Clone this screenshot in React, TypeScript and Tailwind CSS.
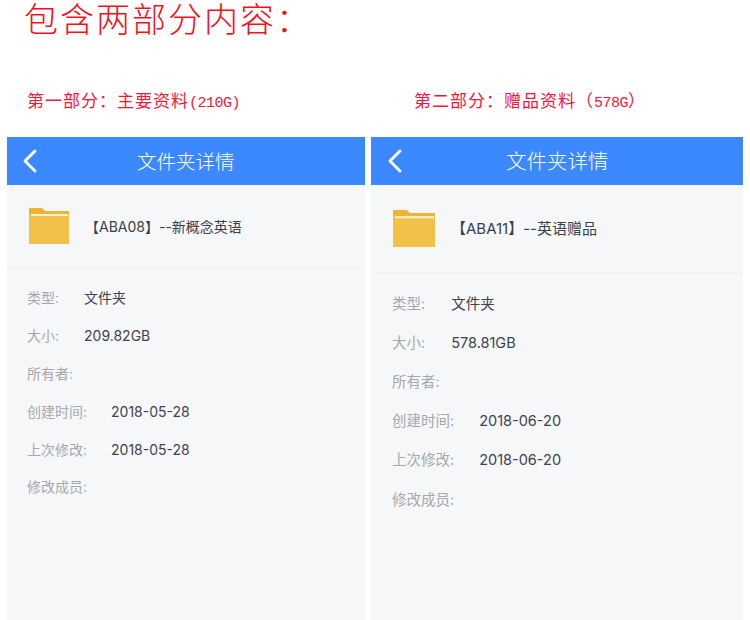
import { ChevronLeft } from "lucide-react";

const serif = "font-['Liberation_Mono','Noto_Sans_CJK_SC',monospace]";
const sans = "font-['Inter','Noto_Sans_CJK_SC',sans-serif]";

type Row = { label: string; value?: string; valueClass: string };

const FolderIcon = ({ className }: { className: string }) => (
    <svg viewBox="0 0 40 36" className={className} preserveAspectRatio="none">
        <path d="M0 1 Q0 0 1 0 H13 L16 3 H40 V36 H0 Z" fill="#eeb32f" />
        <rect x="0" y="6" width="40" height="30" fill="#f2c14a" />
        <rect x="2" y="6" width="37" height="2" fill="#fbf1d6" />
    </svg>
);

type PanelProps = {
    name: string;
    rows: Row[];
    wrapClass: string;
    topClass: string;
    iconClass: string;
    nameClass: string;
    listClass: string;
    rowClass: string;
    backClass: string;
    titleClass: string;
};

const Panel = ({ name, rows, wrapClass, topClass, iconClass, nameClass, listClass, rowClass, backClass, titleClass }: PanelProps) => (
    <div className={`${wrapClass} h-[483px] bg-[#f6f7f8] flex flex-col overflow-hidden`}>
        {/* Header */}
        <div className="h-12 shrink-0 bg-[#3c89ff] flex items-center relative">
            <ChevronLeft className={`${backClass} text-white w-10 h-10`} strokeWidth={1.7} />
            <span className={`${titleClass} ${sans} absolute top-[11px] leading-[28px] text-white font-light`}>文件夹详情</span>
        </div>

        {/* Folder name */}
        <div className={`${topClass} flex items-center border-b border-[#eff0f2] shrink-0`}>
            <FolderIcon className={iconClass} />
            <span className={`${nameClass} ${sans} text-[#3a3f4a]`}>{name}</span>
        </div>

        {/* Properties */}
        <div className={`${listClass} flex flex-col`}>
            {rows.map((row) => (
                <div key={row.label} className={`${rowClass} flex items-center ${sans}`}>
                    <span className="text-[#a6a8ad]">{row.label}</span>
                    {row.value && <span className={`${row.valueClass} text-[#3d4350]`}>{row.value}</span>}
                </div>
            ))}
        </div>
    </div>
);

export default function App() {
    return (
        <div className="w-[750px] h-[620px] bg-white overflow-hidden">
            <h1 className={`${serif} h-[44px] pl-6 pt-px text-[#f5101c] text-[34px] leading-[44px] tracking-[2px] font-light`}>包含两部分内容：</h1>

            <div className={`${serif} flex mt-[48px] h-[21px] text-[#f5163a] text-[17px] leading-[21px] tracking-[1px]`}>
                <span className="ml-[27px] w-[387px]">
                    第一部分：主要资料<span className="text-[15px] tracking-[-0.5px]">(210G)</span>
                </span>
                <span>
                    第二部分：赠品资料（<span className="text-[15px] tracking-[-0.5px]">578G</span>）
                </span>
            </div>

            <div className="flex mt-[24px]">
                <Panel
                    name="【ABA08】--新概念英语"
                    wrapClass="ml-[7px] w-[358px]"
                    topClass="h-[83px] pl-[22px]"
                    iconClass="w-10 h-9 mt-[-1px]"
                    nameClass="ml-[16px] mt-[1px] text-[14px]"
                    listClass="pt-[11px] pl-5 text-[14px]"
                    rowClass="h-[37.8px]"
                    backClass="ml-[3px]"
                    titleClass="left-[130px] text-[19.5px]"
                    rows={[
                        { label: "类型:", value: "文件夹", valueClass: "ml-[25px]" },
                        { label: "大小:", value: "209.82GB", valueClass: "ml-[25px]" },
                        { label: "所有者:", valueClass: "" },
                        { label: "创建时间:", value: "2018-05-28", valueClass: "ml-[24px]" },
                        { label: "上次修改:", value: "2018-05-28", valueClass: "ml-[24px]" },
                        { label: "修改成员:", valueClass: "" },
                    ]}
                />
                <Panel
                    name="【ABA11】--英语赠品"
                    wrapClass="ml-[6px] w-[372px]"
                    topClass="h-[88px] pl-[22px]"
                    iconClass="w-[42px] h-[37px] mt-[-1px]"
                    nameClass="ml-[16px] mt-[2px] text-[15px]"
                    listClass="pt-[11px] pl-[21px] text-[14.5px]"
                    rowClass="h-[39.2px]"
                    backClass="ml-[4px]"
                    titleClass="left-[135px] text-[20.5px]"
                    rows={[
                        { label: "类型:", value: "文件夹", valueClass: "ml-[26px]" },
                        { label: "大小:", value: "578.81GB", valueClass: "ml-[26px]" },
                        { label: "所有者:", valueClass: "" },
                        { label: "创建时间:", value: "2018-06-20", valueClass: "ml-[25px]" },
                        { label: "上次修改:", value: "2018-06-20", valueClass: "ml-[25px]" },
                        { label: "修改成员:", valueClass: "" },
                    ]}
                />
            </div>
        </div>
    );
}
